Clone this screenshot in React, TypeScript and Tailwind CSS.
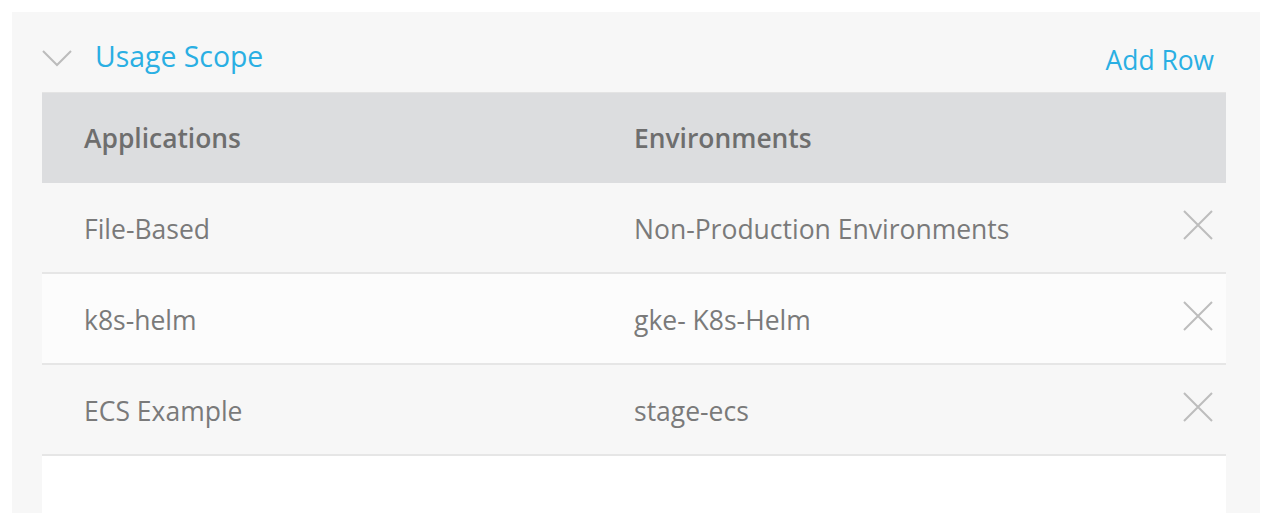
import React from "react";

const rows = [
  { app: "File-Based", env: "Non-Production Environments", bg: "bg-[#f7f7f7]" },
  { app: "k8s-helm", env: "gke- K8s-Helm", bg: "bg-[#fcfcfc]" },
  { app: "ECS Example", env: "stage-ecs", bg: "bg-[#f7f7f7]" },
];

function XIcon() {
  return (
    <svg width="30" height="30" viewBox="0 0 30 30" fill="none">
      <path d="M1 1L29 29M29 1L1 29" stroke="#bdbdbd" strokeWidth="2" />
    </svg>
  );
}

export default function App() {
  return (
    <div className="w-[1268px] h-[532px] bg-white pt-[12px] pl-[12px] overflow-hidden" style={{ fontFamily: '"Open Sans", sans-serif' }}>
      <div className="w-[1248px] h-[501px] bg-[#f7f7f7] pl-[30px] pr-[34px]">
        <div className="h-[80px] flex items-center justify-between">
          <div className="flex items-center pt-[12px]">
            <svg width="30" height="18" viewBox="0 0 30 18" fill="none" className="mr-[23px]">
              <path d="M1 2L15 16L29 2" stroke="#bcbcbc" strokeWidth="2" />
            </svg>
            <span className="text-[28.4px] text-[#2aafe3] leading-none -mt-[3px]">Usage Scope</span>
          </div>
          <span className="text-[26.4px] text-[#2aafe3] leading-none pt-[16px] mr-[12px]">Add Row</span>
        </div>
        <div className="bg-white h-[421px]">
          <div className="h-[91px] bg-[#dcdddf] flex items-center pt-[2px] text-[26.4px] font-semibold text-[#6e6e6e] border-t border-[#e4e4e4]">
            <div className="w-[592px] pl-[42px]">Applications</div>
            <div>Environments</div>
          </div>
          {rows.map((r) => (
            <div key={r.app} className={`h-[91px] ${r.bg} flex items-center pt-[4px] text-[26.5px] text-[#7a7a7a] border-b-2 border-[#e6e6e6]`}>
              <div className="w-[592px] pl-[42px]">{r.app}</div>
              <div className="flex-1">{r.env}</div>
              <div className="pr-[13px] -mt-[10px]"><XIcon /></div>
            </div>
          ))}
        </div>
      </div>
    </div>
  );
}
